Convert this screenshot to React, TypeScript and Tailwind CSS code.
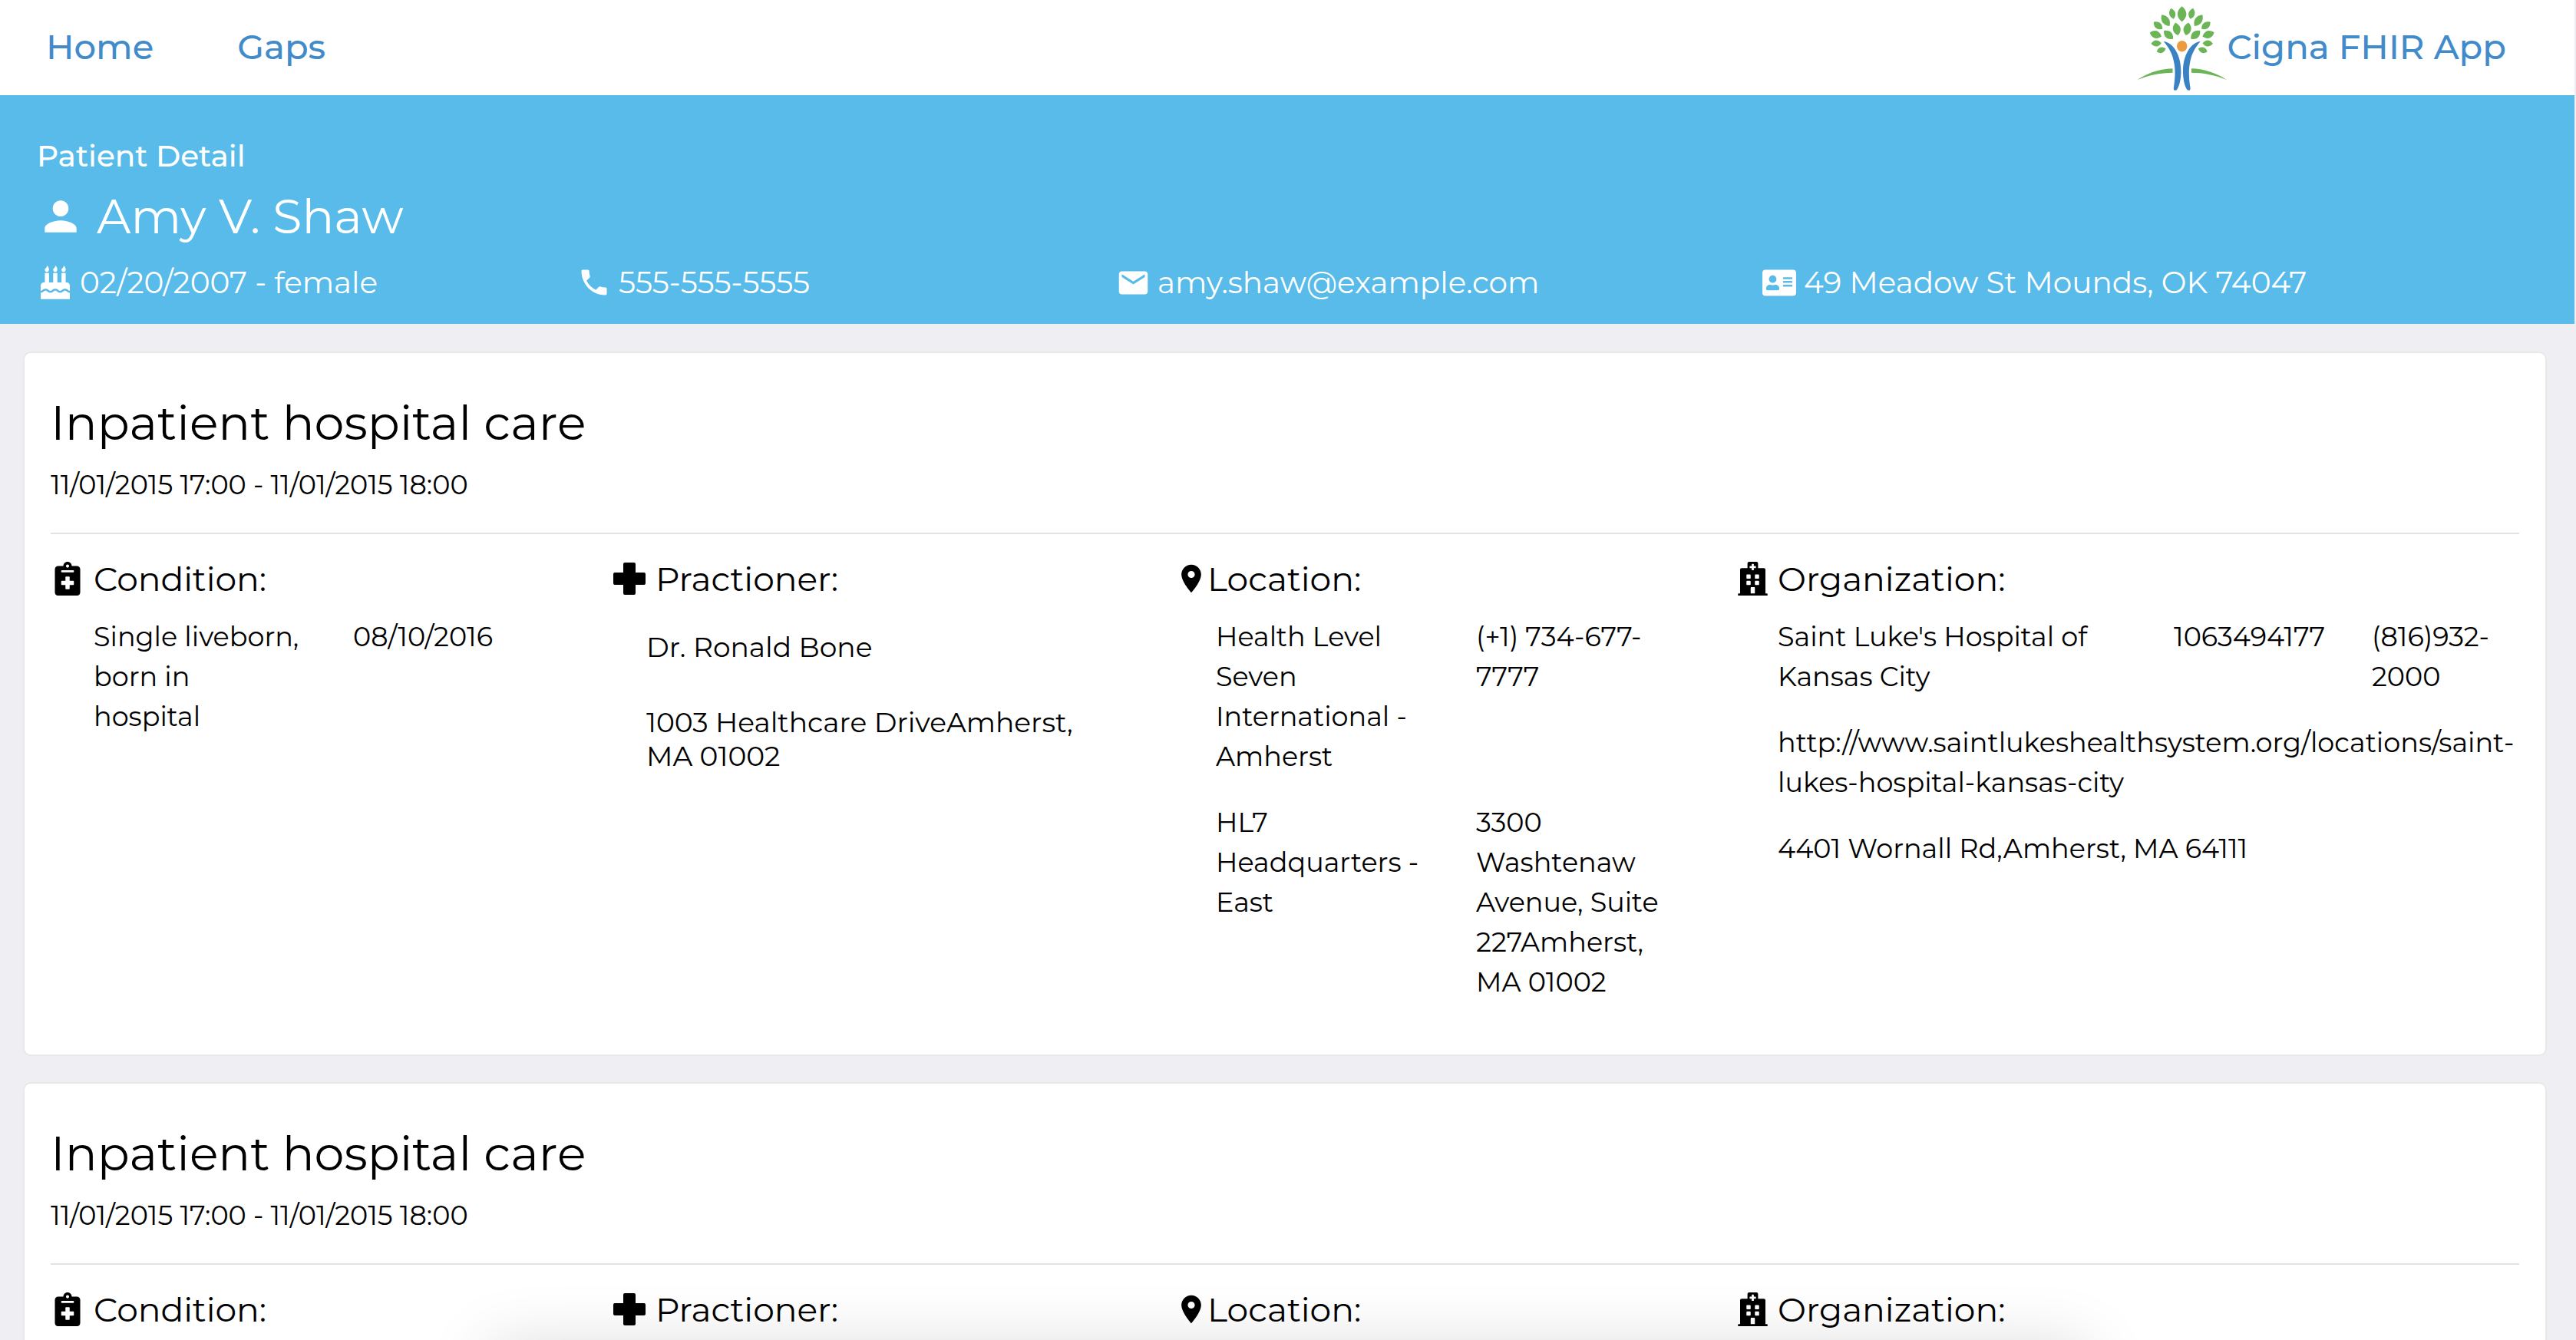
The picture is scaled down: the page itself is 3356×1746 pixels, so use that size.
import React from "react";
import { FaAddressCard, FaBirthdayCake, FaHospital, FaNotesMedical } from "react-icons/fa";
import { MdLocationOn, MdMail, MdPerson, MdPhone } from "react-icons/md";

type Leaf = { x: number; y: number; w: number; h: number; r: number };

const leaves: Leaf[] = [
  { x: 51.1, y: 17.7, w: 8, h: 14.5, r: -14 },
  { x: 42.3, y: 26.7, w: 9.5, h: 18, r: -35 },
  { x: 32.5, y: 33.3, w: 8.5, h: 14.5, r: -52 },
  { x: 56.8, y: 37.7, w: 10, h: 17, r: -12 },
  { x: 46.1, y: 45.3, w: 9.5, h: 16, r: -48 },
  { x: 29.4, y: 45, w: 9.5, h: 16, r: -72 },
  { x: 30.2, y: 56.5, w: 8, h: 13.5, r: -92 },
  { x: 36.6, y: 65.3, w: 7.5, h: 12.5, r: -108 },
];

function LeafShape({ x, y, w, h, r }: Leaf) {
  return (
    <path
      d="M0 -10C7.5 -4 7.5 4 0 10C-7.5 4 -7.5 -4 0 -10Z"
      transform={`translate(${x} ${y}) rotate(${r}) scale(${w / 11.2} ${h / 20})`}
    />
  );
}

function LogoHalf() {
  return (
    <>
      <g fill="#6cb557">
        {leaves.map((leaf) => (
          <LeafShape key={`${leaf.x}-${leaf.y}`} {...leaf} />
        ))}
        <path d="M5.5 104C20 94.5 36 89.6 51.5 89.3V94.7C36 94.7 20 98 5.5 104Z" />
      </g>
      <path
        fill="#3a82c4"
        d="M39.7 54C51 55 62.4 70 62.4 93C62.4 104 60 113 57 117C55.5 118.5 52.5 118 52.8 115C54.6 103 55.4 92 53.4 82C51.5 70 46 61 39.7 54Z"
      />
    </>
  );
}

function Logo() {
  return (
    <svg viewBox="0 0 122 124" className="h-[124px] w-[122px]" aria-hidden="true">
      <g fill="#6cb557">
        <LeafShape x={63.6} y={18.2} w={11.5} h={20} r={0} />
      </g>
      <LogoHalf />
      <g transform="translate(127.4 0) scale(-1 1)">
        <LogoHalf />
      </g>
      <ellipse cx="63.7" cy="60.2" rx="6.7" ry="7.2" fill="#ec9c3f" />
    </svg>
  );
}

function PlusIcon() {
  return (
    <svg viewBox="0 0 42 42" className="h-[42px] w-[42px]" fill="currentColor" aria-hidden="true">
      <rect x="13" y="0" width="16" height="42" rx="2" />
      <rect x="0" y="13" width="42" height="16" rx="2" />
    </svg>
  );
}

function Heading({ icon, iconBox, children }: { icon: React.ReactNode; iconBox: string; children: React.ReactNode }) {
  return (
    <h3 className="flex items-center text-[44px] leading-[54px]">
      <span className={`flex shrink-0 items-center ${iconBox}`}>{icon}</span>
      {children}
    </h3>
  );
}

type Details = {
  condition: string[];
  practitioner: string[];
  location: string[];
  organization: { summary: string[]; lines: string[] };
};

const firstVisit: Details = {
  condition: ["Single liveborn, born in hospital", "08/10/2016"],
  practitioner: ["Dr. Ronald Bone", "1003 Healthcare DriveAmherst, MA 01002"],
  location: [
    "Health Level Seven International - Amherst",
    "(+1) 734-677-7777",
    "HL7 Headquarters - East",
    "3300 Washtenaw Avenue, Suite 227Amherst, MA 01002",
  ],
  organization: {
    summary: ["Saint Luke's Hospital of Kansas City", "1063494177", "(816)932-2000"],
    lines: [
      "http://www.saintlukeshealthsystem.org/locations/saint-lukes-hospital-kansas-city",
      "4401 Wornall Rd,Amherst, MA 64111",
    ],
  },
};

function Encounter({ details }: { details?: Details }) {
  return (
    <article className="rounded-[10px] border-2 border-[#e8e8e8] bg-white px-[34px] pt-[55px] pb-[68px]">
      <h2 className="text-[62px] leading-[72px]">Inpatient hospital care</h2>
      <p className="mt-[23px] text-[35px] leading-[44px]">11/01/2015 17:00 - 11/01/2015 18:00</p>
      <hr className="mt-[40px] border-t-2 border-[#e3e3e3]" />
      <div className="mt-[31px] grid grid-cols-[732fr_732fr_732fr_1020fr] text-[35px] leading-[52px]">
        <section>
          <Heading iconBox="w-[56px] pl-[5px]" icon={<FaNotesMedical className="h-[44px] w-[34px]" />}>
            Condition:
          </Heading>
          {details && (
            <div className="mt-[23px] grid grid-cols-2 pl-[56px]">
              {details.condition.map((text) => (
                <p key={text} className="pr-[68px]">{text}</p>
              ))}
            </div>
          )}
        </section>
        <section>
          <Heading iconBox="w-[56px] pl-[1px]" icon={<PlusIcon />}>
            Practioner:
          </Heading>
          {details && (
            <div className="mt-[40px] flex flex-col gap-[54px] pr-[80px] pl-[44px] text-[36px] leading-[44px]">
              {details.practitioner.map((text) => (
                <p key={text}>{text}</p>
              ))}
            </div>
          )}
        </section>
        <section>
          <Heading iconBox="w-[43px]" icon={<MdLocationOn className="h-[44px] w-[44px] shrink-0" />}>
            Location:
          </Heading>
          {details && (
            <div className="mt-[23px] grid grid-cols-2 gap-y-[34px] pl-[54px]">
              {details.location.map((text) => (
                <p key={text} className="pr-[68px]">{text}</p>
              ))}
            </div>
          )}
        </section>
        <section>
          <Heading iconBox="w-[54px] pl-[2px]" icon={<FaHospital className="h-[44px] w-[39px]" />}>
            Organization:
          </Heading>
          {details && (
            <div className="mt-[23px] flex flex-col gap-[34px] pl-[54px]">
              <div className="grid grid-cols-[516fr_258fr_192fr]">
                {details.organization.summary.map((text) => (
                  <p key={text}>{text}</p>
                ))}
              </div>
              {details.organization.lines.map((text) => (
                <p key={text}>{text}</p>
              ))}
            </div>
          )}
        </section>
      </div>
    </article>
  );
}

function Contact({ icon, children }: { icon: React.ReactNode; children: React.ReactNode }) {
  return (
    <li className="flex items-center">
      <span className="flex w-[54px] shrink-0 items-center">{icon}</span>
      {children}
    </li>
  );
}

export default function App() {
  return (
    <div className="relative flex h-screen flex-col overflow-hidden bg-[#efeef3] font-[Montserrat,Inter,sans-serif] text-black">
      <header className="mr-[2px] flex h-[124px] shrink-0 items-center justify-between bg-white pr-[89px] pl-[60px] text-[45px] leading-[54px] font-medium text-[#428bca]">
        <nav className="flex gap-[109px] pb-[2px]">
          <a href="#home">Home</a>
          <a href="#gaps">Gaps</a>
        </nav>
        <a href="#app" className="flex items-center">
          <Logo />
          <span className="pb-[2px]">Cigna FHIR App</span>
        </a>
      </header>

      <section className="mr-[2px] shrink-0 bg-[#58bbe9] pt-[55px] pr-[50px] pb-[30px] pl-[48px] text-white">
        <p className="text-[39px] leading-[48px] font-medium">Patient Detail</p>
        <h1 className="mt-[19px] flex items-center text-[62px] leading-[72px]">
          <MdPerson className="mr-[16px] h-[62px] w-[62px]" />
          Amy V. Shaw
        </h1>
        <ul className="mt-[26px] grid grid-cols-[702fr_702fr_842fr_1008fr] pl-[2px] text-[39px] leading-[48px]">
          <Contact icon={<FaBirthdayCake className="ml-[3px] h-[44px] w-[38px]" />}>02/20/2007 - female</Contact>
          <Contact icon={<MdPhone className="h-[44px] w-[44px]" />}>555-555-5555</Contact>
          <Contact icon={<MdMail className="h-[45px] w-[45px]" />}>amy.shaw@example.com</Contact>
          <Contact icon={<FaAddressCard className="h-[39px] w-[44px]" />}>49 Meadow St Mounds, OK 74047</Contact>
        </ul>
      </section>

      <main className="flex min-h-0 grow flex-col gap-[34px] overflow-y-auto pt-[36px] pr-[38px] pl-[30px] [scrollbar-width:none] [&>*]:shrink-0">
        <Encounter details={firstVisit} />
        <Encounter />
      </main>

      <div className="pointer-events-none absolute top-full right-[19%] left-[19%] mt-2 h-40 shadow-[0_0_84px_rgba(0,0,0,0.15)]" />
    </div>
  );
}
